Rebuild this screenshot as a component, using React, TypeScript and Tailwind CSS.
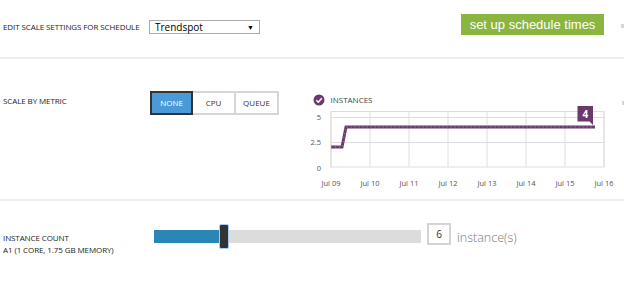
import React from "react";

const gridX = [26, 65, 104, 143, 182, 221, 260, 299];
const days = ["Jul 09", "Jul 10", "Jul 11", "Jul 12", "Jul 13", "Jul 14", "Jul 15", "Jul 16"];

function InstancesChart() {
  return (
    <svg width="317" height="100" viewBox="0 0 317 100" className="block shrink-0">
      {/* legend */}
      <circle cx="14" cy="10" r="5.5" fill="#6b3a6b" />
      <path d="M11.3 10.2 L13.3 12.2 L16.8 8.3" fill="none" stroke="#fff" strokeWidth="1.6" />
      <text x="25.5" y="13" fontSize="8" fill="#444" fontFamily="Open Sans, sans-serif">
        INSTANCES
      </text>

      {/* grid */}
      <rect x="26" y="21.5" width="273" height="55.5" fill="none" stroke="#dedede" />
      {gridX.map((x) => (
        <line key={x} x1={x} y1="21.5" x2={x} y2="77" stroke="#dedede" />
      ))}
      <line x1="26" y1="27.5" x2="299" y2="27.5" stroke="#dedede" />
      <line x1="26" y1="52.5" x2="299" y2="52.5" stroke="#dedede" />

      {/* y labels */}
      <g fontSize="7.5" fill="#555" textAnchor="end" fontFamily="Open Sans, sans-serif">
        <text x="16" y="30">5</text>
        <text x="16" y="55">2.5</text>
        <text x="16" y="81">0</text>
      </g>

      {/* x labels */}
      <g fontSize="7.5" fill="#555" textAnchor="middle" fontFamily="Open Sans, sans-serif">
        {gridX.map((x, i) => (
          <text key={x} x={x} y="96">
            {days[i]}
          </text>
        ))}
      </g>

      {/* series */}
      <path d="M26 57 L37 57 L41 37 L290 37" fill="none" stroke="#6b3a6b" strokeWidth="3" />
      <path
        d="M26 57 L37 57 L41 37 L290 37"
        fill="none"
        stroke="#a88aa8"
        strokeWidth="1"
        strokeDasharray="1 3"
      />

      {/* value flag */}
      <path d="M272.5 16 H288 V35 L284.5 31.5 H272.5 Z" fill="#6b3a6b" />
      <text x="280.3" y="27.5" fontSize="10" fontWeight="700" fill="#fff" textAnchor="middle" fontFamily="Open Sans, sans-serif">
        4
      </text>
    </svg>
  );
}

export default function App() {
  return (
    <div className="w-[624px] h-[286px] bg-white overflow-hidden text-[#333] font-['Open_Sans',sans-serif]">
      {/* Schedule row */}
      <div className="h-[57px] flex items-start pl-[3px]">
        <span className="w-[146px] mt-[22px] text-[8px] leading-[10px] tracking-[-0.1px] text-[#222]">
          EDIT SCALE SETTINGS FOR SCHEDULE
        </span>
        <div className="mt-[20px] w-[111px] h-[14px] border border-[#aaa] flex items-center justify-between pl-[5px] pr-[5px] text-[10px] leading-none text-black">
          <span>Trendspot</span>
          <span className="text-[7px]">▼</span>
        </div>
        <button className="ml-[201px] mt-[14px] w-[143px] h-[21px] bg-[#8ab541] text-white text-[13px] leading-none font-['Liberation_Sans',Arial,sans-serif]">
          set up schedule times
        </button>
        <div className="ml-[17px] mt-[24px] w-[3px] h-[4px] bg-[#d6d6d6]" />
      </div>
      <div className="h-[2px] bg-[#eeeeee]" />

      {/* Metric row */}
      <div className="h-[140px] flex items-start">
        <span className="pl-[3px] w-[150px] mt-[37px] text-[8px] leading-[10px] tracking-[-0.1px] text-[#222]">
          SCALE BY METRIC
        </span>
        <div className="mt-[32px] flex text-[8px] leading-none">
          <div className="w-[43px] h-[24px] bg-[#4a9ad8] border-2 border-[#333] text-white flex items-center justify-center">
            NONE
          </div>
          <div className="w-[43px] h-[24px] border-2 border-l-0 border-[#d6d6d6] flex items-center justify-center">
            CPU
          </div>
          <div className="w-[43px] h-[24px] border-2 border-l-0 border-[#d6d6d6] flex items-center justify-center">
            QUEUE
          </div>
        </div>
        <div className="ml-[26px] mt-[31px]">
          <InstancesChart />
        </div>
        <div className="mt-[42px] w-[2px] h-[4px] bg-[#d6d6d6]" />
      </div>
      <div className="h-[2px] bg-[#eeeeee]" />

      {/* Instance count row */}
      <div className="flex items-start">
        <div className="pl-[3px] w-[154px] mt-[31px] text-[8px] leading-[12px] tracking-[-0.1px] text-[#222]">
          <div>INSTANCE COUNT</div>
          <div>A1 (1 CORE, 1.75 GB MEMORY)</div>
        </div>
        <div className="relative mt-[23px] w-[267px] h-[25px]">
          <div className="mt-[6px] h-[13px] flex bg-[#dcdcdc]">
            <div className="w-[66px] bg-[#2a86b7]" />
          </div>
          <div className="absolute left-[65px] top-0 w-[10px] h-[25px] border border-[#a9cbf2] rounded-[2px] bg-[#333]" />
        </div>
        <div className="ml-[6px] mt-[22px] w-[24px] h-[22px] border-2 border-[#d4d4d4] flex items-center justify-center text-[10px] text-[#333]">
          6
        </div>
        <span className="ml-[6px] mt-[27px] text-[12.5px] leading-[20px] text-[#777] font-light">instance(s)</span>
      </div>
    </div>
  );
}
